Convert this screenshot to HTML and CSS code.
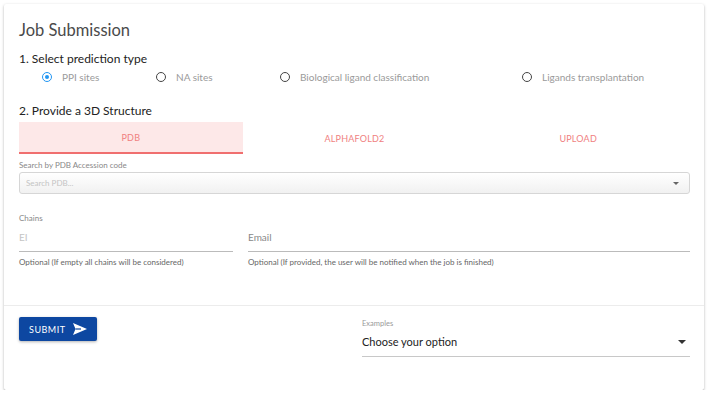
FILE: index.html
```html
<!DOCTYPE html>
<html>
<head>
<meta charset="utf-8">
<link rel="stylesheet" href="styles.css">
</head>
<body>
<div class="card">
  <div class="card-body">
    <h1 class="title">Job Submission</h1>
    <h2 class="section">1. Select prediction type</h2>
    <div class="radios">
      <label class="radio r1"><span class="dot checked"></span>PPI sites</label>
      <label class="radio r2"><span class="dot"></span>NA sites</label>
      <label class="radio r3"><span class="dot"></span>Biological ligand classification</label>
      <label class="radio r4"><span class="dot"></span>Ligands transplantation</label>
    </div>
    <h2 class="section s2">2. Provide a 3D Structure</h2>
    <div class="tabs">
      <div class="tab active">PDB</div>
      <div class="tab">ALPHAFOLD2</div>
      <div class="tab">UPLOAD</div>
    </div>
    <div class="small-label">Search by PDB Accession code</div>
    <div class="search">
      <span class="placeholder">Search PDB...</span>
      <span class="caret small"></span>
    </div>
    <div class="fields">
      <div class="field chains">
        <div class="small-label">Chains</div>
        <div class="input ph-light">EI</div>
        <div class="helper">Optional (If empty all chains will be considered)</div>
      </div>
      <div class="field email">
        <div class="small-label">&nbsp;</div>
        <div class="input">Email</div>
        <div class="helper">Optional (If provided, the user will be notified when the job is finished)</div>
      </div>
    </div>
  </div>
  <div class="card-actions">
    <div class="left">
      <button class="submit">SUBMIT
        <svg width="14" height="12" viewBox="0 0 14 12"><path d="M0 0 L14 6 L0 12 L2.5 6 Z" fill="#fff"/><path d="M2.5 6 H8" stroke="#0d47a1" stroke-width="1.2"/></svg>
      </button>
    </div>
    <div class="right">
      <div class="ex-label">Examples</div>
      <div class="select">
        <span>Choose your option</span>
        <span class="caret"></span>
      </div>
    </div>
  </div>
</div>
</body>
</html>
```

FILE: styles.css
```css
* { box-sizing: border-box; }
html, body { margin: 0; padding: 0; background: #fff; }
body {
  font-family: Lato, "Open Sans", "DejaVu Sans", sans-serif;
  color: #333;
  padding: 4px 5px 0 4px;
}
.card {
  width: 700px;
  height: 386px;
  background: #fff;
  box-shadow: 0 1px 3px rgba(0,0,0,0.26), 0 1px 1px rgba(0,0,0,0.14);
  border-radius: 2px;
  display: flex;
  flex-direction: column;
}
.card-body {
  padding: 16px 15px 0 15px;
  height: 302px;
  border-bottom: 1px solid #ececec;
}
.title {
  margin: 0;
  font-weight: 400;
  font-size: 16.5px;
  line-height: 20px;
  color: #4a4a4a;
}
.section {
  margin: 11px 0 0 0;
  font-weight: 400;
  font-size: 12px;
  line-height: 16px;
  color: #222;
}
.s2 { margin-top: 17px; }
.radios {
  display: flex;
  height: 18px;
  align-items: center;
  margin-top: 1px;
  padding-left: 23px;
}
.radio {
  display: flex;
  align-items: center;
  font-size: 10px;
  color: #9a9a9a;
}
.r1 { width: 114px; }
.r2 { width: 124px; }
.r3 { width: 242px; }
.dot {
  width: 10px; height: 10px;
  border: 1.5px solid #444;
  border-radius: 50%;
  margin-right: 10px;
  position: relative;
}
.dot.checked { border-color: #2196f3; }
.dot.checked::after {
  content: "";
  position: absolute;
  left: 1.5px; top: 1.5px;
  width: 4px; height: 4px;
  border-radius: 50%;
  background: #2196f3;
}
.tabs {
  display: flex;
  margin-top: 3px;
  width: 671px;
  height: 32px;
}
.tab {
  flex: 1;
  display: flex;
  align-items: center;
  justify-content: center;
  font-size: 9px;
  color: #f07f7f;
  letter-spacing: 0.2px;
}
.tab.active {
  background: #fde8e8;
  border-bottom: 2px solid #f06f6f;
}
.small-label {
  font-size: 8px;
  color: #888;
  margin-top: 6px;
  line-height: 10px;
}
.search {
  margin-top: 2px;
  width: 671px;
  height: 22px;
  border: 1px solid #d6d6d6;
  border-radius: 3px;
  background: linear-gradient(#fff, #f1f1f1);
  display: flex;
  align-items: center;
  justify-content: space-between;
  padding: 0 10px 0 6px;
}
.placeholder { font-size: 8px; color: #c4c4c4; }
.caret {
  width: 0; height: 0;
  border-left: 4px solid transparent;
  border-right: 4px solid transparent;
  border-top: 4px solid #333;
}
.caret.small {
  border-left-width: 3px;
  border-right-width: 3px;
  border-top: 3px solid #666;
}
.fields {
  display: flex;
  gap: 15px;
  margin-top: 19px;
  width: 671px;
}
.chains { width: 214px; }
.email { flex: 1; }
.field .small-label { margin-top: 0; }
.input {
  margin-top: 4px;
  height: 25px;
  border-bottom: 1px solid #bbb;
  font-size: 10px;
  color: #888;
  line-height: 16px;
  padding-top: 2px;
}
.ph-light { color: #c4c4c4; }
.helper {
  margin-top: 5px;
  font-size: 8px;
  line-height: 10px;
  color: #666;
}
.card-actions {
  flex: 1;
  display: flex;
  padding: 11px 14px 0 15px;
}
.left { width: 343px; }
.submit {
  width: 78px;
  height: 24px;
  background: #0d47a1;
  color: #fff;
  border: none;
  border-radius: 2px;
  box-shadow: 0 1px 3px rgba(0,0,0,0.3);
  font-family: inherit;
  font-size: 9px;
  letter-spacing: 0.5px;
  display: flex;
  align-items: center;
  justify-content: space-between;
  padding: 0 10px 0 10px;
}
.right { flex: 1; }
.ex-label {
  font-size: 7.5px;
  color: #999;
  margin-top: 2px;
}
.select {
  margin-top: 7px;
  height: 22px;
  border-bottom: 1px solid #c8c8c8;
  display: flex;
  justify-content: space-between;
  align-items: flex-start;
  font-size: 11px;
  color: #222;
  padding-right: 4px;
}
.select .caret { margin-top: 5px; }
```
